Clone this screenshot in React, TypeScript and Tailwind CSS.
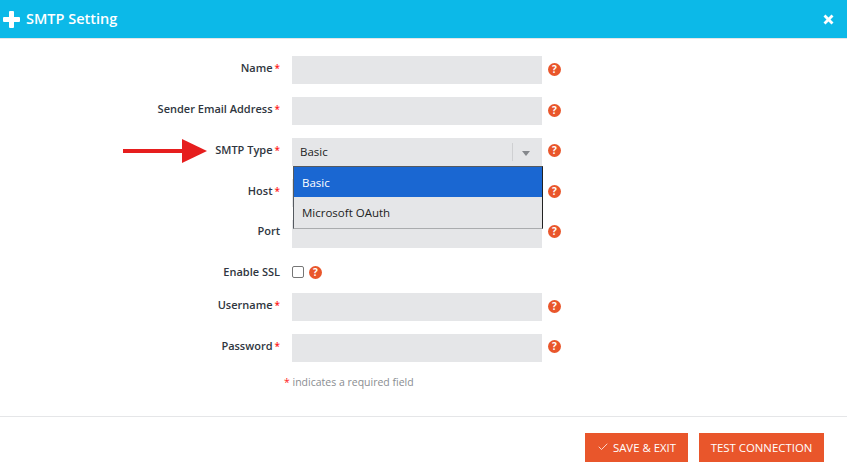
import { Check } from "lucide-react";

const font = { fontFamily: '"Open Sans", "Noto Sans", sans-serif' };

function Help() {
  return (
    <span className="flex h-[13px] w-[13px] shrink-0 items-center justify-center rounded-full bg-[#e9562b] text-[10px] font-bold leading-none text-white">
      ?
    </span>
  );
}

function Label({ text, required = true, up = "pb-[4px]" }: { text: string; required?: boolean; up?: string }) {
  return (
    <div className={`w-[280px] shrink-0 text-right text-[11px] font-semibold text-[#2f3640] ${up}`}>
      {text}
      {required && <span className="ml-[2px] text-[10px] text-[#ff1a1a]">*</span>}
    </div>
  );
}

function Row({
  label,
  required = true,
  up,
  helpUp = "pb-[2px]",
}: {
  label: string;
  required?: boolean;
  up?: string;
  helpUp?: string;
}) {
  return (
    <div className="flex h-[28px] items-center">
      <Label text={label} required={required} up={up} />
      <div className="ml-[12px] h-[28px] w-[250px] bg-[#e5e6e8]" />
      <div className={`ml-[6px] ${helpUp}`}>
        <Help />
      </div>
    </div>
  );
}

export default function App() {
  return (
    <div className="h-[473px] w-[847px] overflow-hidden bg-white" style={font}>
      {/* header */}
      <div className="flex h-[39px] items-center justify-between border-b border-[#e4e6e8] bg-[#0cb9e8] pl-[3px] pr-[13px] text-white">
        <div className="flex items-center gap-[6px]">
          <svg width="17" height="17" viewBox="0 0 17 17" fill="white">
            <rect x="6" y="0" width="5" height="17" rx="1" />
            <rect x="0" y="6" width="17" height="5" rx="1" />
          </svg>
          <span className="pb-[1px] text-[14.5px] font-semibold">SMTP Setting</span>
        </div>
        <svg width="11" height="11" viewBox="0 0 11 11" fill="white">
          <path d="M2.5 0.5 5.5 3.5 8.5 0.5 10.5 2.5 7.5 5.5 10.5 8.5 8.5 10.5 5.5 7.5 2.5 10.5 0.5 8.5 3.5 5.5 0.5 2.5Z" />
        </svg>
      </div>

      {/* form */}
      <div className="flex flex-col gap-[13px] pt-[17px]">
        <Row label="Name" />
        <Row label="Sender Email Address" />

        {/* smtp type with open dropdown */}
        <div className="relative flex h-[28px] items-center">
          <svg className="absolute left-[123px] top-[1px]" width="85" height="25" viewBox="0 0 85 25" fill="#e61e1e">
            <rect x="0" y="10" width="60" height="4" />
            <polygon points="59,0 84,12 59,24" />
          </svg>
          <Label text="SMTP Type" />
          <div className="relative ml-[12px] flex h-[28px] w-[250px] items-center bg-[#e5e6e8] pl-[8px] text-[11.5px] text-[#222]">
            Basic
            <div className="absolute right-[29px] top-[5px] h-[18px] w-px bg-[#cfd0d2]" />
            <div className="absolute right-[12px] top-[13px] h-0 w-0 border-x-[4.5px] border-t-[5px] border-x-transparent border-t-[#85888c]" />
            <div className="absolute left-[1px] top-[28px] z-10 w-[250px] border border-[#555a60] border-r-[#222] border-b-[#aaacae] bg-[#e5e6e8] text-[11.5px]">
              <div className="flex h-[30px] items-center bg-[#1a67d2] pl-[8px] pt-[2px] text-white">Basic</div>
              <div className="flex h-[31px] items-center pl-[8px] text-[#222]">Microsoft OAuth</div>
            </div>
          </div>
          <div className="ml-[6px] pb-[4px]">
            <Help />
          </div>
        </div>

        <Row label="Host" helpUp="pb-[4px]" />
        <Row label="Port" required={false} up="pb-[6px]" helpUp="pb-[6px]" />

        <div className="flex h-[19px] items-center pt-[3px]">
          <Label text="Enable SSL" required={false} up="pb-0" />
          <input type="checkbox" className="ml-[12px] h-[12px] w-[12px] appearance-none rounded-[2px] border border-[#767676] bg-white" />
          <div className="ml-[5px]">
            <Help />
          </div>
        </div>

        <Row label="Username" />
        <Row label="Password" helpUp="pb-[4px]" />
      </div>

      <div className="pl-[284px] pt-[13px] text-[10.5px] text-[#8a8d91]">
        <span className="text-[#ff1a1a]">*</span> indicates a required field
      </div>

      {/* footer */}
      <div className="mt-[25px] flex justify-end gap-[11px] border-t border-[#e5e6e8] pr-[23px] pt-[16px]">
        <button className="flex h-[29px] w-[103px] items-center justify-center gap-[4px] bg-[#e9562b] text-[11.4px] text-white">
          <Check size={12} strokeWidth={1.5} />
          SAVE &amp; EXIT
        </button>
        <button className="h-[29px] w-[125px] bg-[#e9562b] text-[11.4px] text-white">TEST CONNECTION</button>
      </div>
    </div>
  );
}
